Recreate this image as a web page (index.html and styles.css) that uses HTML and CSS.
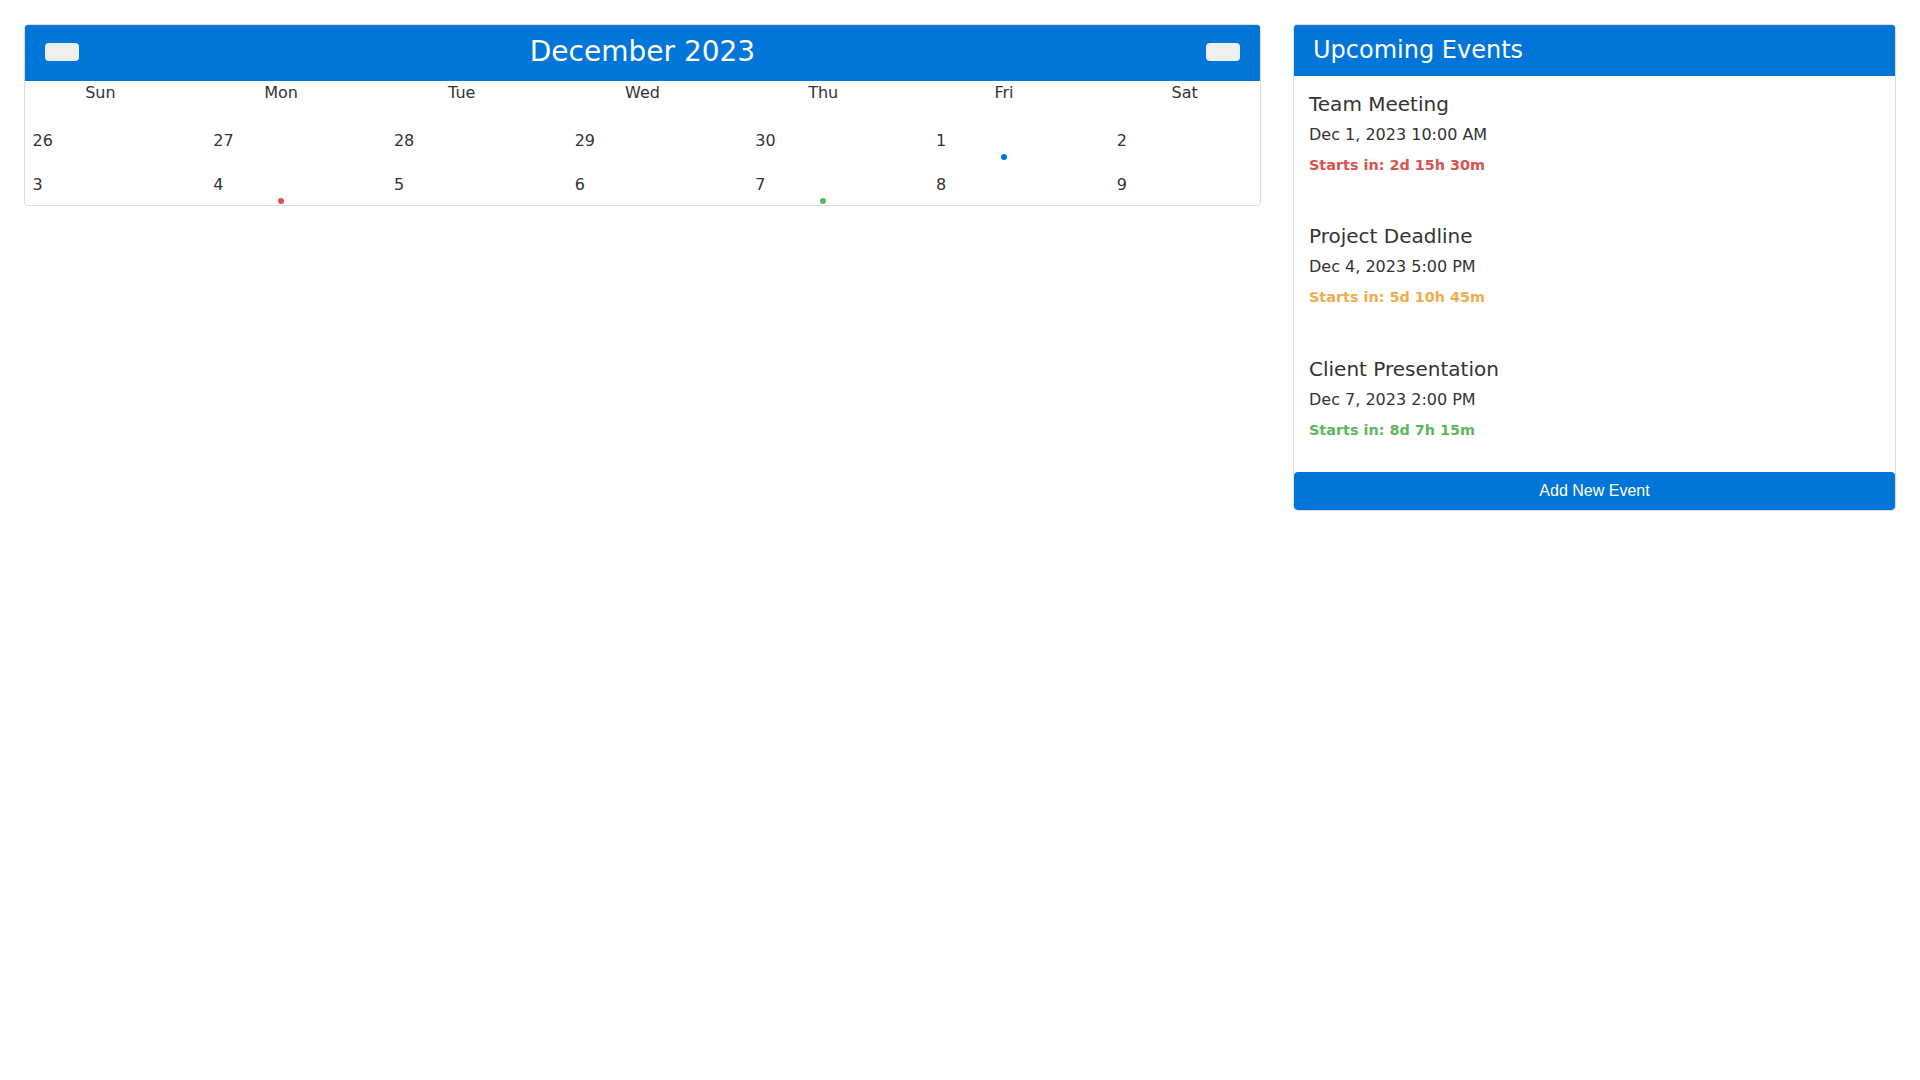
FILE: index.html
```html
<!DOCTYPE html>
<html lang="en">
<head>
<meta charset="utf-8">
<title>Calendar</title>
<link rel="stylesheet" href="styles.css">
</head>
<body>
<div class="app">
  <section class="calendar">
    <header class="cal-header">
      <button class="nav-btn" aria-label="Previous month"></button>
      <h2 class="cal-title">December 2023</h2>
      <button class="nav-btn" aria-label="Next month"></button>
    </header>
    <div class="weekdays">
      <div>Sun</div><div>Mon</div><div>Tue</div><div>Wed</div><div>Thu</div><div>Fri</div><div>Sat</div>
    </div>
    <div class="days">
      <div class="day"><span>26</span></div>
      <div class="day"><span>27</span></div>
      <div class="day"><span>28</span></div>
      <div class="day"><span>29</span></div>
      <div class="day"><span>30</span></div>
      <div class="day"><span>1</span><i class="dot dot-blue"></i></div>
      <div class="day"><span>2</span></div>
      <div class="day"><span>3</span></div>
      <div class="day"><span>4</span><i class="dot dot-red"></i></div>
      <div class="day"><span>5</span></div>
      <div class="day"><span>6</span></div>
      <div class="day"><span>7</span><i class="dot dot-green"></i></div>
      <div class="day"><span>8</span></div>
      <div class="day"><span>9</span></div>
    </div>
  </section>

  <aside class="events">
    <h3 class="events-header">Upcoming Events</h3>
    <div class="event-list">
      <div class="event">
        <h4 class="event-title">Team Meeting</h4>
        <p class="event-date">Dec 1, 2023 10:00 AM</p>
        <p class="countdown countdown-red">Starts in: 2d 15h 30m</p>
      </div>
      <div class="event">
        <h4 class="event-title">Project Deadline</h4>
        <p class="event-date">Dec 4, 2023 5:00 PM</p>
        <p class="countdown countdown-orange">Starts in: 5d 10h 45m</p>
      </div>
      <div class="event">
        <h4 class="event-title">Client Presentation</h4>
        <p class="event-date">Dec 7, 2023 2:00 PM</p>
        <p class="countdown countdown-green">Starts in: 8d 7h 15m</p>
      </div>
    </div>
    <button class="add-btn">Add New Event</button>
  </aside>
</div>
</body>
</html>
```

FILE: styles.css
```css
html, body {
  margin: 0;
  padding: 0;
  background: #ffffff;
}

body {
  font-family: "DejaVu Sans", sans-serif;
  font-size: 16px;
  color: #333333;
}

.app {
  display: flex;
  align-items: flex-start;
  gap: 32px;
  padding: 24px;
}

/* Calendar */
.calendar {
  flex: 1;
  border: 1px solid #dddddd;
  border-radius: 4px;
  overflow: hidden;
  background: #ffffff;
}

.cal-header {
  display: flex;
  align-items: center;
  justify-content: space-between;
  background: #0275d8;
  color: #ffffff;
  padding: 10px 20px 13px;
}

.cal-title {
  margin: 0;
  font-size: 28px;
  font-weight: normal;
  line-height: normal;
}

.nav-btn {
  width: 34px;
  height: 18px;
  padding: 0;
  border: none;
  border-radius: 4px;
  background: #efefef;
}

.weekdays {
  display: grid;
  grid-template-columns: repeat(7, 1fr);
  column-gap: 30px;
  padding-top: 2px;
  text-align: center;
  line-height: normal;
}

.days {
  display: grid;
  grid-template-columns: repeat(7, 1fr);
  grid-auto-rows: 37.4px;
  column-gap: 30px;
  row-gap: 6.6px;
  margin-top: 21.35px;
}

.day {
  display: flex;
  flex-direction: column;
  align-items: flex-start;
  padding: 8px 7.5px 0;
  box-sizing: border-box;
  line-height: normal;
}

.dot {
  display: block;
  width: 6px;
  height: 6px;
  border-radius: 50%;
  margin-top: 3.3px;
  align-self: center;
}

.dot-blue { background: #0275d8; }
.dot-red { background: #d9534f; }
.dot-green { background: #5cb85c; }

/* Events */
.events {
  width: 603px;
  box-sizing: border-box;
  border: 1px solid #dddddd;
  border-radius: 4px;
  overflow: hidden;
  display: flex;
  flex-direction: column;
  background: #ffffff;
}

.events-header {
  margin: 0;
  background: #0275d8;
  color: #ffffff;
  font-size: 24px;
  font-weight: normal;
  line-height: normal;
  padding: 11px 20px 12px 19px;
}

.event-list {
  display: flex;
  flex-direction: column;
  gap: 17.6px;
  padding-bottom: 16px;
}

.event {
  padding: 16px 15px 18px;
}

.event-title {
  margin: 0 0 9px;
  font-size: 20px;
  font-weight: normal;
  line-height: normal;
}

.event-date {
  margin: 0 0 12.8px;
  font-size: 16px;
  line-height: normal;
}

.countdown {
  margin: 0;
  font-size: 14.4px;
  font-weight: bold;
  line-height: normal;
}

.countdown-red { color: #d9534f; }
.countdown-orange { color: #f0ad4e; }
.countdown-green { color: #5cb85c; }

.add-btn {
  display: block;
  width: 100%;
  border: none;
  border-radius: 4px;
  background: #0275d8;
  color: #ffffff;
  font-family: "Liberation Sans", Arial, sans-serif;
  font-size: 16px;
  line-height: normal;
  padding: 10px;
}
```
